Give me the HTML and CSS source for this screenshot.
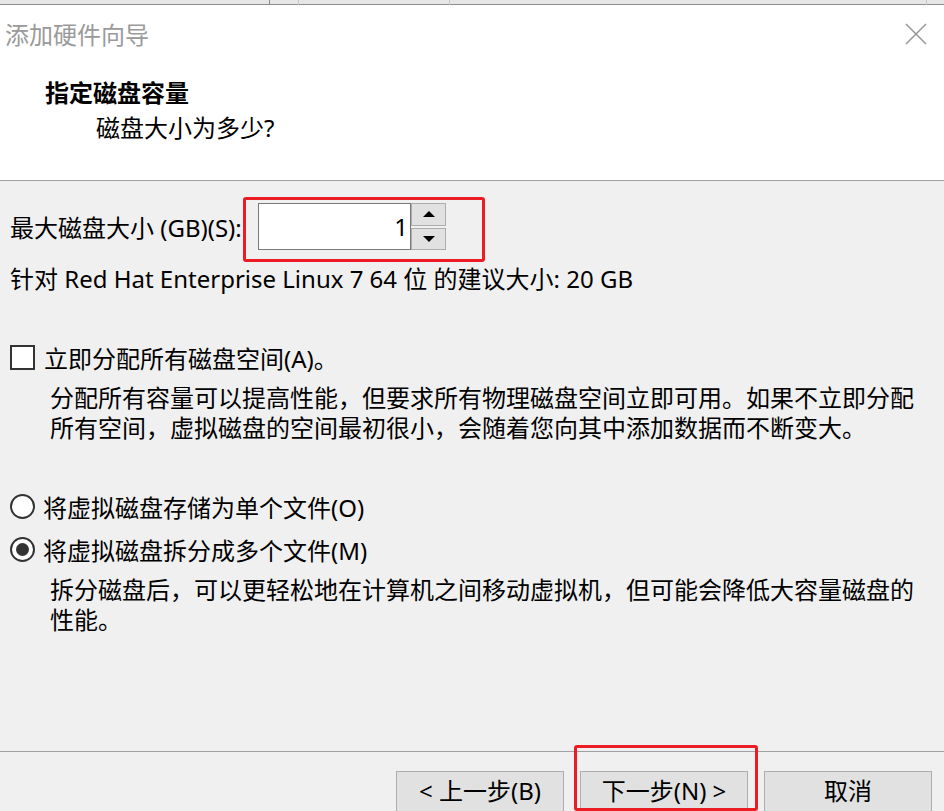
FILE: index.html
```html
<!DOCTYPE html>
<html lang="zh-CN">
<head>
  <meta charset="UTF-8">
  <meta name="viewport" content="width=device-width, initial-scale=1.0"/>
  <title>添加硬件向导</title>
  <link rel="stylesheet" href="styles.css">
</head>
<body>
  <div class="strip">
    <span class="tick t1"></span>
    <span class="tick t2"></span>
    <span class="tick t3"></span>
    <span class="tick t4"></span>
  </div>
  <div class="top">
    <div class="titlebar">
      <span class="title">添加硬件向导</span>
      <svg class="close" width="22" height="22" viewBox="0 0 22 22">
        <path d="M1 1 L21 21 M21 1 L1 21" stroke="#999" stroke-width="1.6" fill="none"/>
      </svg>
    </div>
    <div class="heading">指定磁盘容量</div>
    <div class="subtitle">磁盘大小为多少?</div>
  </div>

  <main class="content">
    <div class="row size-row">
      <label class="label">最大磁盘大小 (GB)(S):</label>
      <div class="spinner">
        <div class="spin-value">1</div>
        <div class="spin-buttons">
          <button class="spin-btn"><span class="arrow up"></span></button>
          <button class="spin-btn"><span class="arrow down"></span></button>
        </div>
      </div>
    </div>
    <div class="row hint">针对 Red Hat Enterprise Linux 7 64 位 的建议大小: 20 GB</div>

    <div class="row option check-row">
      <span class="checkbox"></span>
      <span>立即分配所有磁盘空间(A)。</span>
    </div>
    <p class="desc">分配所有容量可以提高性能，但要求所有物理磁盘空间立即可用。如果不立即分配所有空间，虚拟磁盘的空间最初很小，会随着您向其中添加数据而不断变大。</p>

    <div class="row option radio-row first">
      <span class="radio"></span>
      <span>将虚拟磁盘存储为单个文件(O)</span>
    </div>
    <div class="row option radio-row">
      <span class="radio checked"></span>
      <span>将虚拟磁盘拆分成多个文件(M)</span>
    </div>
    <p class="desc">拆分磁盘后，可以更轻松地在计算机之间移动虚拟机，但可能会降低大容量磁盘的性能。</p>
  </main>

  <footer class="footer">
    <button class="btn">&lt; 上一步(B)</button>
    <button class="btn">下一步(N) &gt;</button>
    <button class="btn">取消</button>
  </footer>

  <div class="mark mark-size"></div>
  <div class="mark mark-next"></div>
</body>
</html>
```

FILE: styles.css
```css
html, body {
  margin: 0;
  padding: 0;
}
body {
  width: 944px;
  height: 811px;
  overflow: hidden;
  position: relative;
  background: #f0f0f0;
  font-family: "Noto Sans", "Noto Sans CJK SC", sans-serif;
  font-size: 24px;
  color: #000;
}
.strip {
  height: 4px;
  background: #e6e6e6;
  border-bottom: 1px solid #8c8c8c;
  position: relative;
}
.tick {
  position: absolute;
  top: 0;
  width: 1px;
  height: 5px;
  background: #8c8c8c;
}
.t1 { left: 269px; }
.t2 { left: 298px; background: #c8c8c8; }
.t3 { left: 449px; background: #c8c8c8; }
.t4 { left: 926px; background: #c8c8c8; }
.top {
  background: #fff;
  height: 175px;
  border-bottom: 1px solid #a0a0a0;
}
.titlebar {
  height: 60px;
  display: flex;
  align-items: center;
  justify-content: space-between;
  padding: 0 17px 0 5px;
}
.title {
  color: #9a9a9a;
  line-height: 60px;
}
.close {
  margin-top: -2px;
}
.heading {
  margin: 11px 0 0 45px;
  font-weight: bold;
  line-height: 34px;
}
.subtitle {
  margin-left: 96px;
  line-height: 36px;
}
.content {
  padding: 0 10px;
}
.row {
  display: flex;
  align-items: center;
}
.size-row {
  margin-top: 22px;
  height: 47px;
}
.label {
  width: 248px;
  white-space: nowrap;
}
.spinner {
  display: flex;
  height: 47px;
}
.spin-value {
  width: 149px;
  height: 45px;
  border: 1px solid #7a7a7a;
  background: #fff;
  text-align: right;
  padding-right: 2px;
  line-height: 45px;
}
.spin-buttons {
  display: flex;
  flex-direction: column;
  gap: 2px;
  width: 35px;
}
.spin-btn {
  flex: 1;
  margin: 0;
  padding: 0;
  border: 1px solid #adadad;
  background: #e1e1e1;
  display: flex;
  align-items: center;
  justify-content: center;
}
.arrow {
  width: 0;
  height: 0;
  border-left: 6px solid transparent;
  border-right: 6px solid transparent;
}
.arrow.up { border-bottom: 6px solid #000; }
.arrow.down { border-top: 6px solid #000; }
.hint {
  margin-top: 14px;
  line-height: 30px;
  white-space: nowrap;
}
.option {
  height: 30px;
}
.check-row {
  margin-top: 48px;
  gap: 9px;
}
.checkbox {
  width: 21px;
  height: 21px;
  border: 2px solid #333;
  background: #fff;
}
.desc {
  margin: 11px 0 0;
  padding-left: 40px;
  line-height: 30px;
}
.radio-row {
  margin-top: 13px;
  gap: 8px;
}
.radio-row.first {
  margin-top: 48px;
}
.radio {
  width: 21px;
  height: 21px;
  border: 2px solid #333;
  border-radius: 50%;
  background: #fff;
  display: flex;
  align-items: center;
  justify-content: center;
}
.radio.checked::after {
  content: "";
  width: 13px;
  height: 13px;
  border-radius: 50%;
  background: #333;
}
.footer {
  margin-top: 116px;
  border-top: 1px solid #a0a0a0;
  padding: 19px 12px 0 0;
  display: flex;
  justify-content: flex-end;
  gap: 16px;
}
.btn {
  width: 168px;
  height: 46px;
  margin: 0;
  border: 1px solid #adadad;
  background: #e1e1e1;
  font-family: inherit;
  font-size: 24px;
  line-height: 38px;
  color: #000;
  padding: 0 0 6px;
}
.mark {
  position: absolute;
  border: 3px solid #ec1c24;
  border-radius: 3px;
}
.mark-size {
  left: 243px;
  top: 197px;
  width: 236px;
  height: 59px;
}
.mark-next {
  left: 574px;
  top: 745px;
  width: 178px;
  height: 60px;
}
```
